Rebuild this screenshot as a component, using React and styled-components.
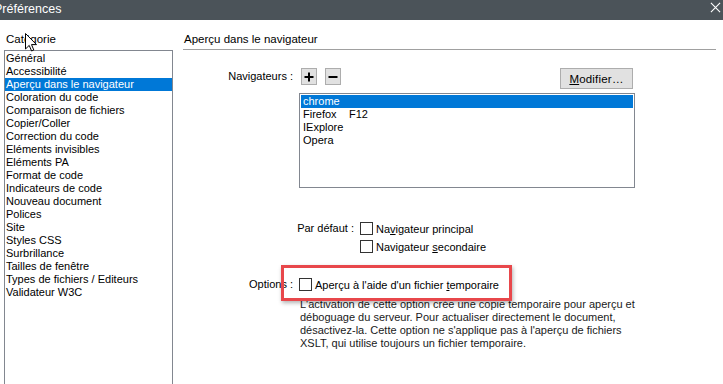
import React from "react";
import styled, { createGlobalStyle } from "styled-components";

const GlobalStyle = createGlobalStyle`
  html, body {
    margin: 0;
    padding: 0;
    background: #ffffff;
  }
  body {
    font-family: "Liberation Sans", Arial, sans-serif;
    font-size: 11px;
    color: #000;
    overflow: hidden;
  }
`;

const categories = [
  "Général",
  "Accessibilité",
  "Aperçu dans le navigateur",
  "Coloration du code",
  "Comparaison de fichiers",
  "Copier/Coller",
  "Correction du code",
  "Eléments invisibles",
  "Eléments PA",
  "Format de code",
  "Indicateurs de code",
  "Nouveau document",
  "Polices",
  "Site",
  "Styles CSS",
  "Surbrillance",
  "Tailles de fenêtre",
  "Types de fichiers / Editeurs",
  "Validateur W3C",
];

const browsers = [
  { name: "chrome", key: "" },
  { name: "Firefox", key: "F12" },
  { name: "IExplore", key: "" },
  { name: "Opera", key: "" },
];

export default function App() {
  return (
    <Window>
      <GlobalStyle />
      <TitleBar>
        <Title>Préférences</Title>
        <CloseIcon viewBox="0 0 12 12">
          <path d="M1 1 L11 11 M11 1 L1 11" stroke="#fff" strokeWidth="1.2" />
        </CloseIcon>
      </TitleBar>

      <Body>
        <Sidebar>
          <SectionLabel>Catégorie</SectionLabel>
          <CategoryList>
            {categories.map((c) => (
              <ListItem key={c} selected={c === "Aperçu dans le navigateur"}>
                {c}
              </ListItem>
            ))}
          </CategoryList>
        </Sidebar>

        <Main>
          <PanelTitle>Aperçu dans le navigateur</PanelTitle>
          <Separator />

          <ToolRow>
            <FieldLabel width={114}>Navigateurs :</FieldLabel>
            <IconButton>
              <svg width="10" height="10" viewBox="0 0 10 10">
                <path d="M5 0.5 V9.5 M0.5 5 H9.5" stroke="#000" strokeWidth="2" />
              </svg>
            </IconButton>
            <IconButton>
              <svg width="10" height="10" viewBox="0 0 10 10">
                <path d="M0.5 5 H9.5" stroke="#000" strokeWidth="2" />
              </svg>
            </IconButton>
            <Spacer />
            <PushButton>
              <u>M</u>odifier…
            </PushButton>
          </ToolRow>

          <BrowserList>
            {browsers.map((b) => (
              <BrowserItem key={b.name} selected={b.name === "chrome"}>
                <BrowserName>{b.name}</BrowserName>
                {b.key}
              </BrowserItem>
            ))}
          </BrowserList>

          <DefaultGroup>
            <CheckRow>
              <FieldLabel width={175}>Par défaut :</FieldLabel>
              <Checkbox />
              <CheckText>
                Na<u>v</u>igateur principal
              </CheckText>
            </CheckRow>
            <CheckRow>
              <FieldLabel width={175} />
              <Checkbox />
              <CheckText>
                Navigateur <u>s</u>econdaire
              </CheckText>
            </CheckRow>
          </DefaultGroup>

          <OptionsGroup>
            <CheckRow>
              <FieldLabel width={114}>Options :</FieldLabel>
              <Checkbox />
              <CheckText>
                Aperçu à l'aide d'un fichier <u>t</u>emporaire
              </CheckText>
            </CheckRow>
            <Description>
              L'activation de cette option crée une copie temporaire pour aperçu et
              <br />
              déboguage du serveur. Pour actualiser directement le document,
              <br />
              désactivez-la. Cette option ne s'applique pas à l'aperçu de fichiers
              <br />
              XSLT, qui utilise toujours un fichier temporaire.
            </Description>
            <Highlight />
          </OptionsGroup>
        </Main>
      </Body>

      <Cursor viewBox="0 0 12 19">
        <path
          d="M0.5 0.5 L0.5 16 L4.2 12.4 L6.6 18 L8.8 17 L6.5 11.6 L11.5 11.6 Z"
          fill="#fff"
          stroke="#000"
          strokeWidth="1"
          strokeLinejoin="round"
        />
      </Cursor>
    </Window>
  );
}

const Window = styled.div`
  position: relative;
  width: 723px;
  height: 384px;
  overflow: hidden;
  background: #fff;
`;

const TitleBar = styled.div`
  height: 20px;
  background: #4b5359;
  display: flex;
  align-items: center;
  justify-content: space-between;
  padding-right: 2px;
`;

const Title = styled.span`
  color: #fff;
  font-size: 12.5px;
  margin-left: -6px;
  margin-top: -3px;
`;

const CloseIcon = styled.svg`
  width: 11px;
  height: 11px;
  margin-top: -5px;
`;

const Body = styled.div`
  display: flex;
  align-items: flex-start;
`;

const Sidebar = styled.div`
  width: 169px;
  padding-left: 4px;
  flex-shrink: 0;
`;

const SectionLabel = styled.div`
  height: 13px;
  line-height: 13px;
  margin-top: 13px;
  padding-left: 2px;
  font-size: 11.5px;
`;

const CategoryList = styled.div`
  margin-top: 4px;
  height: 340px;
  border: 1px solid #828790;
  padding: 1px 0;
  box-sizing: border-box;
`;

const ListItem = styled.div`
  height: 13px;
  line-height: 13px;
  padding-left: 1px;
  white-space: nowrap;
  background: ${(p) => (p.selected ? "#0078d7" : "transparent")};
  color: ${(p) => (p.selected ? "#fff" : "#000")};
`;

const Main = styled.div`
  flex: 1;
  margin-left: 10px;
  padding-right: 7px;
  position: relative;
`;

const PanelTitle = styled.div`
  height: 13px;
  line-height: 13px;
  margin-top: 13px;
  padding-left: 1px;
  font-size: 11.5px;
`;

const Separator = styled.div`
  margin-top: 3px;
  height: 1px;
  background: #a0a0a0;
`;

const ToolRow = styled.div`
  display: flex;
  align-items: flex-start;
  margin-top: 18px;
  height: 20px;
`;

const FieldLabel = styled.div`
  width: ${(p) => p.width}px;
  flex-shrink: 0;
  text-align: right;
  padding-right: 4px;
  box-sizing: border-box;
  line-height: 17px;
  white-space: nowrap;
`;

const IconButton = styled.div`
  width: 16px;
  height: 17px;
  box-sizing: border-box;
  margin-left: 4px;
  margin-right: 4px;
  background: #e1e1e1;
  border: 1px solid #adadad;
  display: flex;
  align-items: center;
  justify-content: center;
`;

const Spacer = styled.div`
  flex: 1;
`;

const PushButton = styled.div`
  width: 73px;
  height: 21px;
  box-sizing: border-box;
  margin-right: 83px;
  background: #e1e1e1;
  border: 1px solid #adadad;
  display: flex;
  align-items: center;
  justify-content: center;
  font-size: 11.5px;
  letter-spacing: 0.2px;
`;

const BrowserList = styled.div`
  margin-top: 5px;
  margin-left: 116px;
  width: 336px;
  height: 95px;
  box-sizing: border-box;
  border: 1px solid #828790;
  padding: 1px;
`;

const BrowserItem = styled.div`
  height: 13px;
  line-height: 13px;
  padding-left: 2px;
  background: ${(p) => (p.selected ? "#0078d7" : "transparent")};
  color: ${(p) => (p.selected ? "#fff" : "#000")};
  display: flex;
`;

const BrowserName = styled.span`
  width: 46px;
`;

const DefaultGroup = styled.div`
  margin-top: 32px;
  display: flex;
  flex-direction: column;
  gap: 1px;
`;

const CheckRow = styled.div`
  display: flex;
  align-items: center;
  height: 17px;
`;

const Checkbox = styled.span`
  width: 13px;
  height: 13px;
  box-sizing: border-box;
  border: 1px solid #333;
  background: #fff;
  margin-left: 2px;
  flex-shrink: 0;
`;

const CheckText = styled.span`
  margin-left: 3px;
  white-space: nowrap;
  font-size: 11px;
`;

const OptionsGroup = styled.div`
  position: relative;
  margin-top: 21px;
`;

const Description = styled.div`
  margin-left: 117px;
  margin-top: 5px;
  line-height: 13px;
  color: #1a1a1a;
  white-space: nowrap;
`;

const Highlight = styled.div`
  position: absolute;
  left: 98px;
  top: -11px;
  width: 231px;
  height: 36px;
  box-sizing: border-box;
  border: 3px solid #e8474b;
  box-shadow: 1px 2px 4px rgba(0, 0, 0, 0.3);
`;

const Cursor = styled.svg`
  position: absolute;
  left: 25px;
  top: 33px;
  width: 12px;
  height: 19px;
`;
